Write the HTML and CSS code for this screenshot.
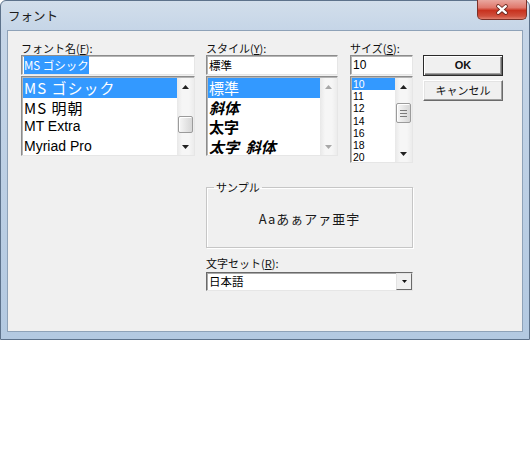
FILE: index.html
```html
<!DOCTYPE html>
<html lang="ja">
<head>
<meta charset="utf-8">
<title>フォント</title>
<link rel="stylesheet" href="styles.css">
</head>
<body>
<div class="window">
  <div class="titlebar">
    <span class="title">フォント</span>
    <div class="close">
      <svg width="50" height="20" viewBox="0 0 50 20">
        <path d="M21 6 L29 13 M29 6 L21 13" stroke="#6b2a22" stroke-width="4.2" stroke-linecap="round"/>
        <path d="M21 6 L29 13 M29 6 L21 13" stroke="#ffffff" stroke-width="2.4" stroke-linecap="round"/>
      </svg>
    </div>
  </div>
  <div class="client">
    <div class="top-row">
      <div class="col col-font">
        <div class="lbl">フォント名(<u>F</u>):</div>
        <div class="edit"><span class="sel">MS ゴシック</span></div>
        <div class="list list-font">
          <ul class="items">
            <li class="on gothic">MS ゴシック</li>
            <li class="gothic">MS 明朝</li>
            <li class="latin">MT Extra</li>
            <li class="latin">Myriad Pro</li>
          </ul>
          <div class="sb">
            <div class="sb-btn"><svg width="7" height="4" viewBox="0 0 7 4"><path d="M0 4 L3.5 0 L7 4Z" fill="#222"/></svg></div>
            <div class="sb-track"><div class="thumb thumb-font"></div></div>
            <div class="sb-btn"><svg width="7" height="4" viewBox="0 0 7 4"><path d="M0 0 L3.5 4 L7 0Z" fill="#222"/></svg></div>
          </div>
        </div>
      </div>
      <div class="col col-style">
        <div class="lbl">スタイル(<u>Y</u>):</div>
        <div class="edit">標準</div>
        <div class="list list-style">
          <ul class="items">
            <li class="on">標準</li>
            <li class="italic">斜体</li>
            <li class="bold">太字</li>
            <li class="bold italic">太字&nbsp;&nbsp;斜体</li>
          </ul>
          <div class="sb">
            <div class="sb-btn"><svg width="7" height="4" viewBox="0 0 7 4"><path d="M0 4 L3.5 0 L7 4Z" fill="#a8a8a8"/></svg></div>
            <div class="sb-track"></div>
            <div class="sb-btn"><svg width="7" height="4" viewBox="0 0 7 4"><path d="M0 0 L3.5 4 L7 0Z" fill="#a8a8a8"/></svg></div>
          </div>
        </div>
      </div>
      <div class="col col-size">
        <div class="lbl">サイズ(<u>S</u>):</div>
        <div class="edit num">10</div>
        <div class="list list-size">
          <ul class="items">
            <li class="on">10</li>
            <li>11</li>
            <li>12</li>
            <li>14</li>
            <li>16</li>
            <li>18</li>
            <li>20</li>
          </ul>
          <div class="sb">
            <div class="sb-btn"><svg width="7" height="4" viewBox="0 0 7 4"><path d="M0 4 L3.5 0 L7 4Z" fill="#222"/></svg></div>
            <div class="sb-track">
              <div class="thumb thumb-size">
                <svg width="7" height="7" viewBox="0 0 7 7"><path d="M0 0.5H7M0 3.5H7M0 6.5H7" stroke="#7a7a7a" stroke-width="1"/></svg>
              </div>
            </div>
            <div class="sb-btn"><svg width="7" height="4" viewBox="0 0 7 4"><path d="M0 0 L3.5 4 L7 0Z" fill="#222"/></svg></div>
          </div>
        </div>
      </div>
      <div class="buttons">
        <div class="btn default">OK</div>
        <div class="btn">キャンセル</div>
      </div>
    </div>
    <div class="lower">
      <fieldset class="sample">
        <legend>サンプル</legend>
        <div class="sample-text">Aaあぁアァ亜宇</div>
      </fieldset>
      <div class="lbl charset-lbl">文字セット(<u>R</u>):</div>
      <div class="combo">
        <span class="val">日本語</span>
        <span class="drop"><svg width="5" height="3" viewBox="0 0 5 3"><path d="M0 0 L2.5 3 L5 0Z" fill="#111"/></svg></span>
      </div>
    </div>
  </div>
</div>
</body>
</html>
```
FILE: styles.css
```css
body {
  margin: 0;
  background: #ffffff;
  font-family: "Noto Sans CJK JP", "Liberation Sans", sans-serif;
  color: #000;
}

.window {
  box-sizing: border-box;
  width: 530px;
  height: 340px;
  border: 1px solid #5d728b;
  border-radius: 6px 6px 0 0;
  padding: 0 6px 7px;
  background: linear-gradient(180deg, #d2deeb 0px, #c5d5e7 30px, #b3c9e1 100%);
  display: flex;
  flex-direction: column;
}

.titlebar {
  height: 29px;
  display: flex;
  justify-content: space-between;
  align-items: flex-start;
}

.title {
  margin: 7px 0 0 1px;
  font-size: 12.5px;
  line-height: 15px;
  color: #1d1d1d;
}

.close {
  width: 50px;
  height: 20px;
  margin: -1px -4px 0 0;
  box-sizing: border-box;
  border: 1px solid #7c3128;
  border-top: none;
  border-radius: 0 0 5px 5px;
  background: linear-gradient(180deg, #e9a79f 0%, #e0786c 40%, #c8321f 55%, #d0503d 85%, #e07f6e 100%);
  display: flex;
  align-items: center;
  justify-content: center;
  overflow: hidden;
}

.close svg {
  display: block;
  margin-top: 1px;
}

.client {
  flex: 1;
  background: #f0f0f0;
  border: 1px solid #8ea2b8;
}

.top-row {
  display: flex;
  align-items: flex-start;
  padding: 11px 0 0 13px;
}

.col-font { width: 174px; margin-right: 11px; }
.col-style { width: 132px; margin-right: 12px; }
.col-size { width: 63px; margin-right: 10px; }

.lbl {
  font-size: 11px;
  line-height: 13px;
  height: 13px;
  white-space: nowrap;
  color: #111;
}

.lbl u {
  text-underline-offset: 1px;
}

.edit {
  box-sizing: border-box;
  height: 20px;
  background: #fff;
  border: 1px solid;
  border-color: #8c8c8c #e6e6e6 #e6e6e6 #8c8c8c;
  box-shadow: inset 1px 1px 0 #b5b5b5;
  font-size: 11.5px;
  line-height: 18px;
  padding-left: 2px;
  white-space: nowrap;
  overflow: hidden;
}

.edit.num {
  font-family: "Liberation Sans", sans-serif;
  font-size: 12px;
}

.sel {
  background: #3399ff;
  color: #fff;
  padding: 1px 0;
}

.list {
  box-sizing: border-box;
  margin-top: 1px;
  display: flex;
  background: #fff;
  border: 1px solid;
  border-color: #8c8c8c #e6e6e6 #e6e6e6 #8c8c8c;
  box-shadow: inset 1px 1px 0 #b5b5b5;
  padding: 1px 0 0 1px;
  overflow: hidden;
}

.list-font, .list-style { height: 80px; }
.list-size { height: 87px; }

.items {
  flex: 1;
  list-style: none;
  margin: 0;
  padding: 0;
  min-width: 0;
}

.items li {
  white-space: nowrap;
  padding-left: 1px;
}

.items li.on {
  background: #3399ff;
  color: #fff;
}

.list-font li,
.list-style li {
  height: 19.5px;
  line-height: 19.5px;
}

.list-font li.gothic {
  font-size: 15px;
  letter-spacing: 1px;
}

.list-font li.latin {
  font-family: "Liberation Sans", sans-serif;
  font-size: 14px;
}

.list-style li {
  font-size: 15px;
}

.list-style li.bold { font-weight: 700; }
.list-style li.italic { font-style: italic; font-weight: 600; }

.list-size li {
  font-family: "Liberation Sans", sans-serif;
  font-size: 10.5px;
  height: 12.2px;
  line-height: 12.2px;
  padding-left: 1px;
}

.sb {
  width: 17px;
  flex: none;
  display: flex;
  flex-direction: column;
  background: linear-gradient(90deg, #e8e8e8, #f6f6f6 30%, #f6f6f6 70%, #ececec);
}

.sb-btn {
  height: 17px;
  flex: none;
  display: flex;
  align-items: center;
  justify-content: center;
}

.sb-btn svg { display: block; }

.sb-track {
  flex: 1;
}

.thumb {
  box-sizing: border-box;
  margin: 0 1px;
  border: 1px solid #9b9b9b;
  border-radius: 2px;
  background: linear-gradient(90deg, #f7f7f7, #e3e3e3 60%, #d6d6d6);
  box-shadow: inset 1px 1px 0 #fff;
  display: flex;
  align-items: center;
  justify-content: center;
}

.thumb-font { margin-top: 21px; height: 17px; }
.thumb-size { margin-top: 8px; height: 20px; }
.thumb svg { display: block; }

.buttons {
  width: 80px;
  margin-top: 13px;
  display: flex;
  flex-direction: column;
  gap: 4px;
}

.btn {
  box-sizing: border-box;
  height: 21px;
  font-size: 11px;
  line-height: 19px;
  text-align: center;
  color: #111;
  background: #f0f0f0;
  border: 1px solid;
  border-color: #fff #6a6a6a #6a6a6a #fff;
  box-shadow: inset -1px -1px 0 #a0a0a0, inset 1px 1px 0 #e3e3e3;
}

.btn.default {
  border: 1px solid #2a2a2a;
  box-shadow: inset 1px 1px 0 #fff, inset -1px -1px 0 #6a6a6a, inset -2px -2px 0 #a0a0a0;
  font-weight: 700;
  font-family: "Liberation Sans", sans-serif;
}

.lower {
  margin-left: 198px;
  width: 207px;
  margin-top: 18px;
}

.sample {
  box-sizing: border-box;
  height: 67px;
  margin: 0;
  padding: 0;
  min-width: 0;
  border: 1px solid #c6c6c6;
  box-shadow: inset 1px 1px 0 #fff, 1px 1px 0 #fff;
}

.sample legend {
  margin-left: 7px;
  padding: 0 2px;
  font-size: 11px;
  line-height: 13px;
  color: #111;
}

.sample-text {
  text-align: center;
  padding-top: 17px;
  font-size: 13px;
  line-height: 16px;
  letter-spacing: 1px;
  color: #1a1a1a;
}

.charset-lbl {
  margin-top: 9px;
}

.combo {
  box-sizing: border-box;
  margin-top: 2px;
  height: 19px;
  display: flex;
  background: #fff;
  border: 1px solid;
  border-color: #6a6a6a #e6e6e6 #e6e6e6 #6a6a6a;
  box-shadow: inset 1px 1px 0 #a8a8a8;
}

.combo .val {
  flex: 1;
  font-size: 11.5px;
  line-height: 17px;
  padding-left: 2px;
}

.combo .drop {
  box-sizing: border-box;
  width: 16px;
  height: 17px;
  flex: none;
  display: flex;
  align-items: center;
  justify-content: center;
  background: #f0f0f0;
  border: 1px solid;
  border-color: #e3e3e3 #6a6a6a #6a6a6a #e3e3e3;
}

.combo .drop svg { display: block; }
```
